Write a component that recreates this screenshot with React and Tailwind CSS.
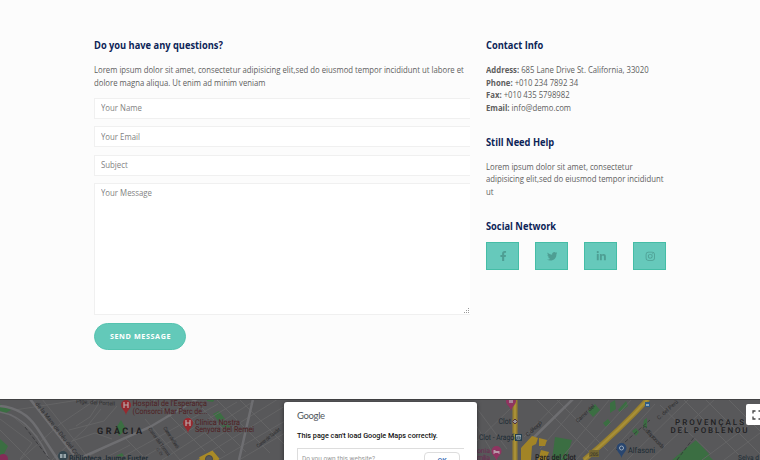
import React from "react";
import { FaFacebookF, FaTwitter, FaLinkedinIn, FaInstagram } from "react-icons/fa";

const socials = [FaFacebookF, FaTwitter, FaLinkedinIn, FaInstagram];

function Heading({ children }) {
  return <h2 className="h-[14px] w-fit origin-left scale-x-[0.941] whitespace-nowrap text-[9.9px] leading-[14px] font-bold text-[#0c2457]">{children}</h2>;
}

function Copy({ children }) {
  return <div className="w-fit origin-left scale-x-[0.911] text-[8.5px] leading-[12.4px] whitespace-nowrap">{children}</div>;
}

function Field({ label }) {
  return (
    <div className="flex h-[21px] items-center border border-r-0 border-[#f0f0f0] bg-white pt-px pl-[6px] text-[8.5px] text-[#828282]">
      <span className="origin-left scale-x-[0.92]">{label}</span>
    </div>
  );
}

function Pin({ x, y, color = "#96292f", children }) {
  return (
    <g transform={`translate(${x} ${y})`}>
      <path d="M0 9C-1 4-5 3-5-1A5 5 0 0 1 5-1C5 3 1 4 0 9Z" fill={color} />
      {children}
    </g>
  );
}

function CityMap() {
  return (
    <svg className="block h-[61px] w-[760px]" viewBox="0 0 760 61" fontFamily="Roboto, 'Liberation Sans', sans-serif" textRendering="geometricPrecision">
      <rect width="760" height="61" fill="#58585a" />
      {/* parks */}
      <g fill="#3b6e42">
        <path d="M0 5L11 11 4 15 0 12ZM0 40L8 47 4 55 0 57ZM207 0h8l-2 3-6-1ZM213 15l6-3 12 16-6 3ZM116 29l5-8 5 9-7 7ZM116 57l6-3 5 7h-11Z" />
        <path d="M588 12l7-7 5 6-7 7ZM610 4l5-3 1 9-6 4ZM603 24l5-4 3 4-5 4ZM618 11l8-9 2 5-8 6ZM552 61l3-23 17 3-6 20ZM632 32l4-3 3 4-3 4ZM644 21l3-2v10l-4-1Z" />
        <path d="M672 61l24-20 14 15-4 5ZM705 53l8 8h-10Z" />
      </g>
      {/* minor streets */}
      <g stroke="#656567" strokeWidth=".9" fill="none">
        <path d="M0 31L30 61M15 11L85 0M42 0L90 61M20 61L60 25 97 0M52 61L85 30 101 10M69 31L104 22 117 7M72 42L95 34 112 40M76 27L90 18 99 4M87 58L125 38M101 61L130 46M117 61L218 5M139 61L237 3M153 0L205 52M171 0L225 54M193 0L246 53M216 0L270 54M239 0L285 46M162 61L254 2M180 61L278 0M197 61L285 7M218 61L285 22M239 61L285 34M126 40L147 61M145 20L180 61M0 20L32 44 20 60M10 15L38 38" />
        <path d="M476 8L507 50M476 26L497 61M476 43L512 8M524 38L561 0M540 50L583 0M536 0L590 54M556 0L608 52M560 61L610 0M576 61L632 0M604 61L655 5M627 61L689 0M660 6L711 55M683 0L742 59M705 0L760 55M728 0L760 32M650 61L715 0M702 61L760 18M724 61L760 34" />
      </g>
      <g stroke="#6e6e71" strokeWidth="2.5" fill="none">
        <path d="M0 7Q24 9 37 29T58 61M30 0L78 61M76 61L150 28 197 0M253 0L239 61M523 49L573 0" />
      </g>
      <g stroke="#6b6b6e" strokeWidth="1.5" fill="none"><path d="M0 13Q18 16 31 31T49 61" /></g>
      <path d="M25 28L50 61M616 51L650 21M677 61L695 37" stroke="#343437" strokeWidth=".8" strokeDasharray="4 2" fill="none" />
      {/* yellow avenues and blocks */}
      <path d="M515 0V61M584 61C610 39 628 22 648 0" stroke="#98802d" strokeWidth="5" fill="none" />
      <path d="M515 0V61M584 61C610 39 628 22 648 0" stroke="#a89038" strokeWidth="2" fill="none" />
      <path d="M198 61l14-9 7 9M521 61V49l11-12 6 2-2 6-4 2-1 14ZM539 39l8 2-2 6h-6ZM541 51l8 2-3 8h-8Z" fill="#a28426" />
      <path d="M200 60l12-6 6 7" stroke="#a98a26" strokeWidth="4" fill="none" />
      <circle cx="209" cy="60" r="3.5" fill="#58585a" stroke="#47484a" />
      {/* street labels */}
      <g fill="#2d2d2f" fontSize="6">
        <text transform="translate(35 5) rotate(52)">de la Mare de Déu del Coll</text>
        <text transform="translate(76 4) rotate(4)" fontSize="5.5">Ptge. del Portell</text>
        <text transform="translate(148 30) rotate(54)" fontSize="5" textLength="34">Carrer del Torrent</text>
        <text transform="translate(163 29) rotate(57)" fontSize="5" textLength="25">Carrer de Seró</text>
        <text transform="translate(156 50) rotate(54)" fontSize="4">C. Or</text>
        <text transform="translate(258 49) rotate(-38)" fontSize="5" textLength="29">Carrer de Taxdirt</text>
        <text transform="translate(528 38) rotate(-44)" fontSize="5.7" textLength="20">C. d'Aragó</text>
        <text transform="translate(578 24) rotate(-44)" fontSize="5.5">Carrer del</text>
        <text transform="translate(642 29) rotate(46)" fontSize="5.5" textLength="29">C. d'Espronceda</text>
        <text transform="translate(659 21) rotate(-42)" fontSize="5.5">C. del Perú</text>
      </g>
      <Pin x={126} y={7}><path d="M-2-4v6M2-4v6M-2-1h4" stroke="#b9a9aa" strokeWidth="1.2" /></Pin>
      <Pin x={188} y={25}><path d="M-2-4v6M2-4v6M-2-1h4" stroke="#b9a9aa" strokeWidth="1.2" /></Pin>
      <Pin x={511} y={3} color="#8f3460"><path d="M-2-2h4v3h-4z" fill="#a78697" /></Pin>
      <Pin x={496.5} y={53} color="#8f3460"><path d="M-3-2h2v1h4v3h-1v-1h-4v1h-1z" fill="#b799a8" /></Pin>
      <g fill="#4f2124" fontSize="8" stroke="#58585a" strokeWidth="1.2" paintOrder="stroke">
        <text x="132.500" y="7" textLength="74.500" lengthAdjust="spacingAndGlyphs">Hospital de l'Esperança</text>
        <text x="132.500" y="15" textLength="75" lengthAdjust="spacingAndGlyphs">(Consorci Mar Parc de...</text>
        <text x="195" y="25.500" textLength="45" lengthAdjust="spacingAndGlyphs">Clínica Nostra</text>
        <text x="195" y="33" textLength="59" lengthAdjust="spacingAndGlyphs">Senyora del Remei</text>
      </g>
      <g fill="#202022">
        <text x="97" y="34.500" fontSize="9" fontWeight="700" textLength="45">GRÀCIA</text>
        <text x="675" y="26" fontSize="8" fontWeight="500" textLength="69">PROVENÇALS</text>
        <text x="670.500" y="34" fontSize="8" fontWeight="500" textLength="77">DEL POBLENOU</text>
        <text x="535" y="61" fontSize="8" fontWeight="500" textLength="41" lengthAdjust="spacingAndGlyphs">Parc del Clot</text>
      </g>
      <g fill="#1c2b34" fontSize="8" stroke="#58585a" strokeWidth="1.2" paintOrder="stroke">
        <text x="69" y="61.500" fontWeight="500" textLength="79" lengthAdjust="spacingAndGlyphs">Biblioteca Jaume Fuster</text>
        <text x="498.500" y="24.500" textLength="12.500" lengthAdjust="spacingAndGlyphs">Clot</text>
        <text x="479" y="41" textLength="35" lengthAdjust="spacingAndGlyphs">Clot - Aragó</text>
        <text x="628" y="53.500" textLength="27" lengthAdjust="spacingAndGlyphs">Alfasoni</text>
        <text x="738" y="61" fontSize="7" textLength="21" lengthAdjust="spacingAndGlyphs">Selva d</text>
      </g>
      <g fill="#6d2b51" fontSize="7"><text x="477" y="53.500" textLength="13">onia</text><text x="477" y="60.500" textLength="13">mília</text></g>
      <path d="M515 20l2.500 2.500-2.500 2.500-2.500-2.500z" fill="#999" stroke="#54323b" />
      <rect x="515.5" y="35.5" width="6" height="6" fill="#8f9fa6" stroke="#253f4f" />
      <path d="M517 38h3v2h-3zm0 2-1 1m4-1 1 1" stroke="#253f4f" strokeWidth=".7" fill="none" />
      <rect x="645" y="3" width="5" height="5" fill="#2e5b84" /><path d="M646 5h3v2h-3z" fill="#91a7b5" />
      <rect x="589" y="51" width="10" height="7" fill="#736633" /><text x="590" y="57" fontSize="5" fill="#292929">205</text>
      <Pin x={621.5} y={50} color="#29466f"><circle cy="-1" r="2" fill="none" stroke="#9cabbc" /></Pin>
      <circle cx="63" cy="57" r="5" fill="#34464f" /><path d="M60 55h2.5v4H60zM63.5 55H66v4h-2.5z" fill="#98a5aa" />
      <circle cx="3" cy="60" r="5" fill="#842c57" />
      <path d="M0 .5h760" stroke="#414143" />
    </svg>
  );
}

export default function App() {
  return (
    <main className="h-[460px] w-[760px] overflow-hidden bg-[#fcfcfc] font-['Open_Sans',sans-serif] text-[#5e5e5e]">
      <section className="flex h-[399px] gap-4 pt-[38px] pl-[94px]">
        <form className="flex w-[376px] flex-col">
          <Heading>Do you have any questions?</Heading>
          <div className="mt-[12.4px] pl-[0.4px]">
            <Copy>
              Lorem ipsum dolor sit amet, consectetur adipisicing elit,sed do eiusmod tempor incididunt ut labore et<br />
              dolore magna aliqua. Ut enim ad minim veniam
            </Copy>
          </div>
          <div className="mt-[8.6px] flex flex-col gap-[7.5px]">
            <Field label="Your Name" />
            <Field label="Your Email" />
            <Field label="Subject" />
          </div>
          <div className="mt-[7px] flex h-[132px] justify-between border border-r-0 border-[#f0f0f0] bg-white pl-[6px] text-[8.5px] text-[#828282]">
            <span className="origin-left scale-x-[0.92] pt-[3.5px] leading-[12px]">Your Message</span>
            <svg className="mr-px mb-px size-[5px] self-end" viewBox="0 0 5 5"><path d="M0 4.5h1M2 4.5h1M4 4.5h1M2 2.5h1M4 2.5h1M4 .5h1" stroke="#999" /></svg>
          </div>
          <button type="button" className="mt-2 h-[27px] w-[92px] rounded-full border border-[#55c3af] bg-[#63c9b9] pt-px pl-px text-[7.2px] font-bold tracking-[0.6px] text-white">SEND MESSAGE</button>
        </form>
        <aside className="w-[180.4px]">
          <Heading>Contact Info</Heading>
          <div className="mt-[12.4px]">
            <Copy>
              <p><b>Address:</b> 685 Lane Drive St. California, 33020</p>
              <p><b>Phone:</b> +010 234 7892 34</p>
              <p><b>Fax:</b> +010 435 5798982</p>
              <p><b>Email:</b> info@demo.com</p>
            </Copy>
          </div>
          <div className="mt-[21px]"><Heading>Still Need Help</Heading></div>
          <div className="mt-[12px]">
            <Copy>Lorem ipsum dolor sit amet, consectetur<br />adipisicing elit,sed do eiusmod tempor incididunt<br />ut</Copy>
          </div>
          <div className="mt-[20.8px]"><Heading>Social Network</Heading></div>
          <div className="mt-[9px] flex justify-between">
            {socials.map((Icon, i) => (
              <span key={i} className="flex h-7 w-[33.4px] items-center justify-center border border-[#45bda6] bg-[#66c9bb] pl-px text-[#4e9e93]"><Icon size={10.5} /></span>
            ))}
          </div>
        </aside>
      </section>
      <section className="relative h-[61px] overflow-hidden">
        <CityMap />
        <div className="absolute top-[3px] left-[284px] h-[80px] w-[193px] rounded-[3px] bg-white px-[13px] font-[Roboto,sans-serif] shadow-[0_1px_4px_#0008]">
          <div className="mt-[8px] h-[11px] font-[Lato,sans-serif] text-[9.5px] leading-[11px] font-normal tracking-[-0.35px] text-[#50565c]">Google</div>
          <div className="mt-[10px] whitespace-nowrap text-[7.25px] leading-[10px] font-medium text-[#111]">This page can't load Google Maps correctly.</div>
          <div className="mt-[7px] flex h-[30px] justify-between border-t border-l border-[#ddd] pr-1 pl-1 text-[6.5px] text-[#999]">
            <span className="pt-[6px]">Do you own this website?</span>
            <span className="mt-[3px] h-5 w-[36px] rounded-sm border border-[#ddd] pt-[3px] text-center text-[7px] font-medium text-[#3367b5]">OK</span>
          </div>
        </div>
        <div className="absolute top-[5px] left-[746px] flex h-[21px] w-[21px] items-center justify-center rounded-[2px] bg-white">
          <svg className="size-[10px]" viewBox="0 0 10 10"><path d="M1 3.500V1h2.500M6.500 1H9v2.500M9 6.500V9H6.500M3.500 9H1V6.500" fill="none" stroke="#444" strokeWidth="1.300" /></svg>
        </div>
      </section>
    </main>
  );
}
